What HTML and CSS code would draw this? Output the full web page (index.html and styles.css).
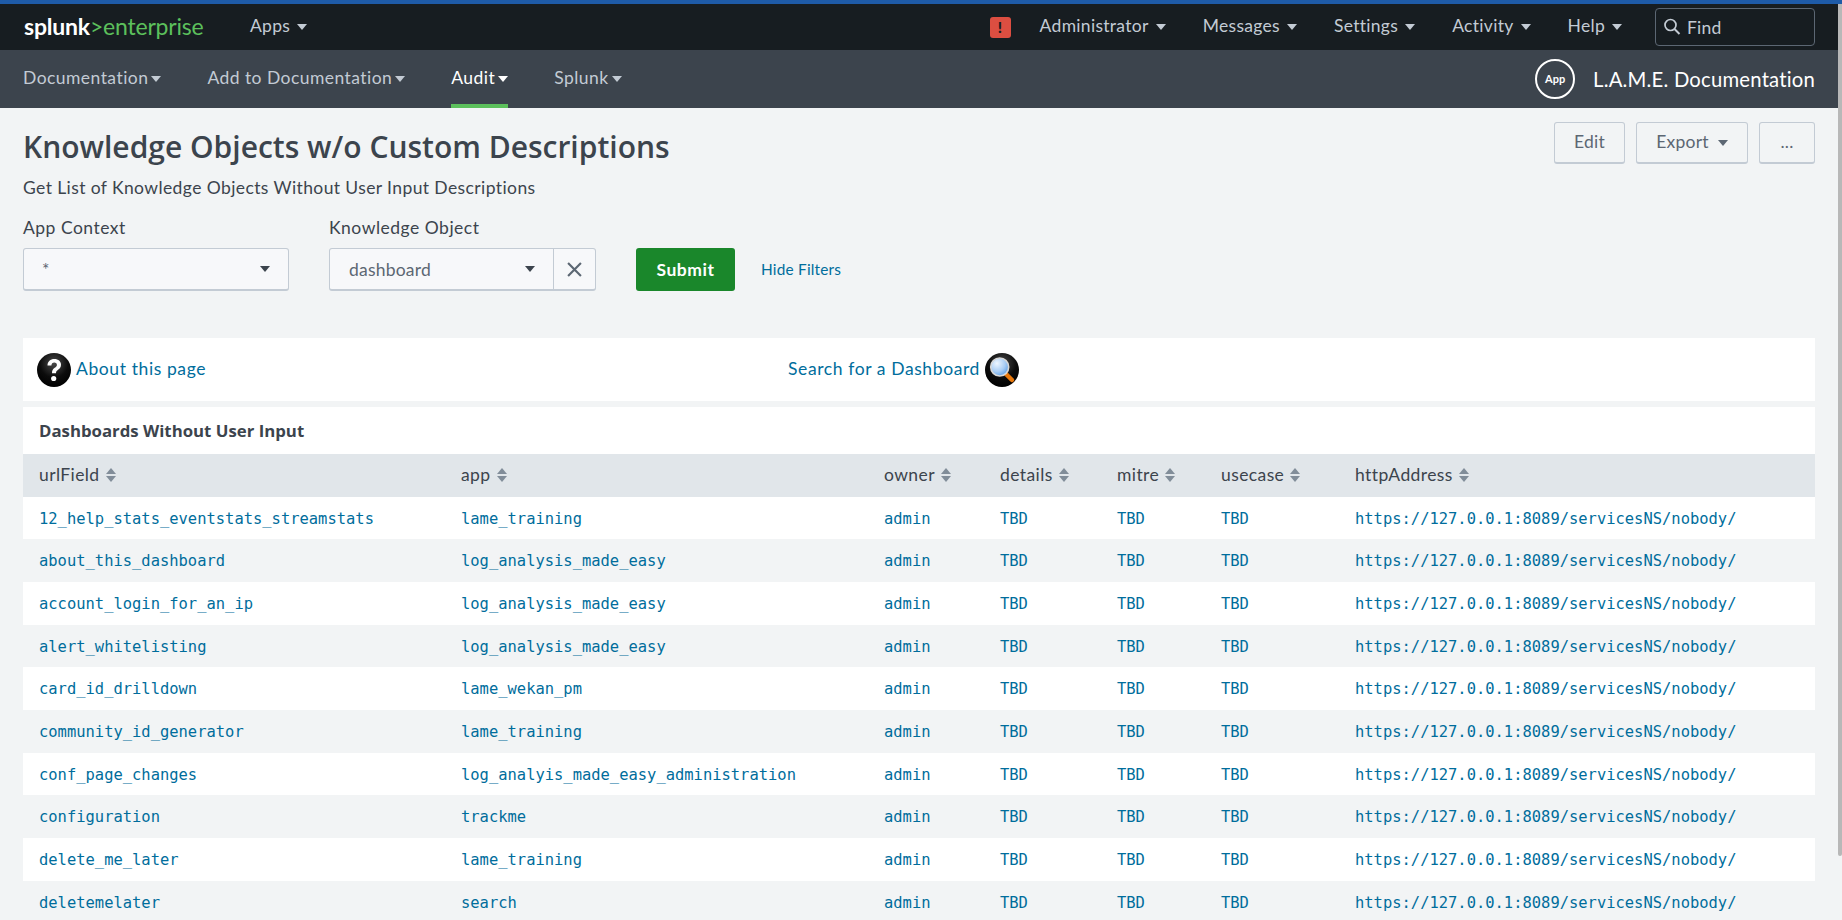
FILE: index.html
```html
<!DOCTYPE html>
<html>
<head>
<meta charset="UTF-8">
<title>Knowledge Objects w/o Custom Descriptions</title>
<link rel="stylesheet" href="styles.css">
</head>
<body>
<div class="topnav">
  <div class="logo"><span class="logo-white">splunk</span><span class="logo-green">&gt;enterprise</span></div>
  <a class="nav-item apps">Apps<i class="caret"></i></a>
  <div class="spacer"></div>
  <span class="alert">!</span>
  <a class="nav-item">Administrator<i class="caret"></i></a>
  <a class="nav-item">Messages<i class="caret"></i></a>
  <a class="nav-item">Settings<i class="caret"></i></a>
  <a class="nav-item">Activity<i class="caret"></i></a>
  <a class="nav-item">Help<i class="caret"></i></a>
  <div class="find">
    <svg width="18" height="18" viewBox="0 0 18 18"><circle cx="7.5" cy="7" r="5.5" fill="none" stroke="#c3cbd4" stroke-width="1.7"/><path d="M11.5 11l5 5" stroke="#c3cbd4" stroke-width="2"/></svg>
    <span>Find</span>
  </div>
</div>
<div class="appbar">
  <a class="app-item">Documentation<i class="caret"></i></a>
  <a class="app-item">Add to Documentation<i class="caret"></i></a>
  <a class="app-item active">Audit<i class="caret"></i></a>
  <a class="app-item">Splunk<i class="caret"></i></a>
  <div class="spacer"></div>
  <span class="app-icon">App</span>
  <span class="app-name">L.A.M.E. Documentation</span>
</div>
<div class="content">
  <div class="head">
    <div>
      <h1>Knowledge Objects w/o Custom Descriptions</h1>
      <p class="sub">Get List of Knowledge Objects Without User Input Descriptions</p>
    </div>
    <div class="head-btns">
      <a class="btn btn-edit">Edit</a>
      <a class="btn btn-export">Export<i class="caret"></i></a>
      <a class="btn btn-more">...</a>
    </div>
  </div>
  <div class="filters">
    <div class="field field-app">
      <label>App Context</label>
      <div class="select"><span class="val star">*</span><i class="caret"></i></div>
    </div>
    <div class="field field-ko">
      <label>Knowledge Object</label>
      <div class="select select-clear">
        <div class="select-main"><span class="val">dashboard</span><i class="caret"></i></div>
        <div class="clear">
          <svg width="15" height="15" viewBox="0 0 14 14"><path d="M1 1l12 12M13 1L1 13" stroke="#5c6773" stroke-width="2"/></svg>
        </div>
      </div>
    </div>
    <a class="submit">Submit</a>
    <a class="hide-filters">Hide Filters</a>
  </div>
  <div class="panel links">
    <div class="link-left">
      <svg class="round-icon" width="34" height="34" viewBox="0 0 34 34">
        <defs><radialGradient id="ball" cx="50%" cy="30%" r="70%"><stop offset="0" stop-color="#4a4a4a"/><stop offset=".6" stop-color="#0c0c0c"/><stop offset="1" stop-color="#000"/></radialGradient></defs>
        <circle cx="17" cy="17" r="17" fill="url(#ball)"/>
        <path d="M10.5 12.5c0-4 3-6.500 6.800-6.500 4 0 6.700 2.400 6.700 5.800 0 2.600-1.500 4-3.200 5.200-1.300.9-1.800 1.600-1.800 3.200h-4c0-2.700.8-4 2.700-5.400 1.400-1 2.200-1.700 2.200-2.900 0-1.400-1.100-2.300-2.600-2.300-1.700 0-2.800 1-2.900 2.900z" fill="#fff"/>
        <circle cx="16.700" cy="25.500" r="2.600" fill="#fff"/>
      </svg>
      <a>About this page</a>
    </div>
    <div class="link-mid">
      <a>Search for a Dashboard</a>
      <svg class="round-icon" width="34" height="34" viewBox="0 0 34 34">
        <defs>
          <radialGradient id="lens" cx="35%" cy="30%" r="75%"><stop offset="0" stop-color="#eef6ff"/><stop offset=".6" stop-color="#a9cdf5"/><stop offset="1" stop-color="#5b9ee8"/></radialGradient>
        </defs>
        <circle cx="17" cy="17" r="17" fill="url(#ball)"/>
        <path d="M21 21l6 6" stroke="#e8780c" stroke-width="4.500" stroke-linecap="round"/>
        <circle cx="14.700" cy="14" r="9" fill="url(#lens)" stroke="#d8d8d8" stroke-width="1.600"/>
      </svg>
    </div>
  </div>
  <div class="panel table-panel">
    <h2>Dashboards Without User Input</h2>
    <table>
      <colgroup>
        <col class="c1"><col class="c2"><col class="c3"><col class="c4"><col class="c5"><col class="c6"><col class="c7">
      </colgroup>
      <thead>
        <tr>
          <th>urlField<i class="sort"></i></th>
          <th>app<i class="sort"></i></th>
          <th>owner<i class="sort"></i></th>
          <th>details<i class="sort"></i></th>
          <th>mitre<i class="sort"></i></th>
          <th>usecase<i class="sort"></i></th>
          <th>httpAddress<i class="sort"></i></th>
        </tr>
      </thead>
      <tbody>
        <tr><td>12_help_stats_eventstats_streamstats</td><td>lame_training</td><td>admin</td><td>TBD</td><td>TBD</td><td>TBD</td><td>https://127.0.0.1:8089/servicesNS/nobody/</td></tr>
        <tr><td>about_this_dashboard</td><td>log_analysis_made_easy</td><td>admin</td><td>TBD</td><td>TBD</td><td>TBD</td><td>https://127.0.0.1:8089/servicesNS/nobody/</td></tr>
        <tr><td>account_login_for_an_ip</td><td>log_analysis_made_easy</td><td>admin</td><td>TBD</td><td>TBD</td><td>TBD</td><td>https://127.0.0.1:8089/servicesNS/nobody/</td></tr>
        <tr><td>alert_whitelisting</td><td>log_analysis_made_easy</td><td>admin</td><td>TBD</td><td>TBD</td><td>TBD</td><td>https://127.0.0.1:8089/servicesNS/nobody/</td></tr>
        <tr><td>card_id_drilldown</td><td>lame_wekan_pm</td><td>admin</td><td>TBD</td><td>TBD</td><td>TBD</td><td>https://127.0.0.1:8089/servicesNS/nobody/</td></tr>
        <tr><td>community_id_generator</td><td>lame_training</td><td>admin</td><td>TBD</td><td>TBD</td><td>TBD</td><td>https://127.0.0.1:8089/servicesNS/nobody/</td></tr>
        <tr><td>conf_page_changes</td><td>log_analyis_made_easy_administration</td><td>admin</td><td>TBD</td><td>TBD</td><td>TBD</td><td>https://127.0.0.1:8089/servicesNS/nobody/</td></tr>
        <tr><td>configuration</td><td>trackme</td><td>admin</td><td>TBD</td><td>TBD</td><td>TBD</td><td>https://127.0.0.1:8089/servicesNS/nobody/</td></tr>
        <tr><td>delete_me_later</td><td>lame_training</td><td>admin</td><td>TBD</td><td>TBD</td><td>TBD</td><td>https://127.0.0.1:8089/servicesNS/nobody/</td></tr>
        <tr><td>deletemelater</td><td>search</td><td>admin</td><td>TBD</td><td>TBD</td><td>TBD</td><td>https://127.0.0.1:8089/servicesNS/nobody/</td></tr>
      </tbody>
    </table>
  </div>
</div>
<div class="scroll-thumb"></div>
</body>
</html>
```

FILE: styles.css
```css
html,body{margin:0;height:920px;overflow:hidden}
body{font-family:Lato,"Open Sans",sans-serif;font-size:17.5px;letter-spacing:.2px;background-color:#f2f4f5;color:#3c444d;border-top:4px solid #1e5ba8;box-sizing:border-box;position:relative}
.spacer{flex:1}
.caret{display:inline-block;width:0;height:0;border-left:5px solid transparent;border-right:5px solid transparent;border-top:6px solid currentColor;margin-left:7px;vertical-align:2px}

.topnav{height:46px;background-color:#171d21;display:flex;align-items:center;padding:0 27px 0 24px;color:#c3cbd4}
.logo{width:226px;font-size:23px;letter-spacing:-.2px;margin-bottom:3px}
.logo-white{color:#fff;font-weight:700}
.logo-green{color:#5cc05c}
.nav-item{margin:0 37px 3px 0;letter-spacing:.3px;white-space:nowrap}
.alert{width:21px;height:21px;background-color:#dc4e41;border-radius:3px;color:#171d21;font-weight:900;font-size:15px;line-height:21px;text-align:center;margin-right:29px}
.find{width:160px;height:38px;border:1px solid #5c6773;border-radius:4px;margin-left:-4px;display:flex;align-items:center;gap:6px;padding-left:7px;box-sizing:border-box}

.appbar{height:58px;background-color:#3c444d;display:flex;align-items:center;padding:0 27px 0 23px;color:#c3cbd4}
.app-item{margin-right:46px;height:58px;line-height:56px;box-sizing:border-box;letter-spacing:.45px;white-space:nowrap}
.app-item .caret{margin-left:3px}
.app-item.active{color:#fff;border-bottom:4px solid #5cc05c}
.app-icon{width:36px;height:36px;border:2px solid #fff;border-radius:50%;color:#fff;font-size:11px;letter-spacing:0;font-weight:700;line-height:36px;text-align:center;margin-right:18px}
.app-name{color:#fff;font-size:20.3px}

.content{padding:0 27px 0 23px}
.head{display:flex;justify-content:space-between;height:112px}
h1{font-family:"Open Sans",sans-serif;font-size:30px;font-weight:600;letter-spacing:0;margin:20px 0 0;line-height:38px;white-space:nowrap}
.sub{margin:12px 0 0;line-height:20px;letter-spacing:.4px}
.head-btns{display:flex;gap:11px;padding-top:14px}
.btn{height:42px;line-height:38px;box-sizing:border-box;border:1px solid #c3cbd4;border-bottom-width:2px;border-radius:3px;text-align:center;color:#5c6773}
.btn-edit{width:71px}
.btn-export{width:112px}
.btn-export .caret{margin-left:9px}
.btn-more{width:56px}

.filters{display:flex;align-items:flex-end;height:71px}
.field{display:flex;flex-direction:column}
.field label{line-height:20px;margin-bottom:10px;letter-spacing:.5px}
.field-app{width:266px;margin-right:40px}
.field-ko{width:267px;margin-right:40px}
.select{height:43px;box-sizing:border-box;border:1px solid #c3cbd4;border-bottom-width:2px;border-radius:3px;background-color:#f7f8fa;display:flex;align-items:center;justify-content:space-between;padding:0 18px;color:#5c6773}
.select .caret{color:#3c444d}
.select-clear{padding:0}
.select-main{flex:1;display:flex;align-items:center;justify-content:space-between;padding:0 18px 0 19px;height:100%}
.clear{width:41px;height:100%;border-left:1px solid #c3cbd4;display:flex;align-items:center;justify-content:center}
.submit{width:99px;height:43px;line-height:43px;background-color:#1a872b;border-radius:3px;color:#fff;font-weight:700;letter-spacing:.5px;text-align:center}
.hide-filters{color:#006d9c;font-size:15.4px;margin:0 0 13px 26px}

.panel{background-color:#fff}
.links{margin-top:47px;height:63px;display:flex;align-items:center;letter-spacing:.6px}
.links a{color:#006d9c;margin-bottom:2px}
.round-icon{flex:none}
.link-left{display:flex;align-items:center;gap:5px;width:765px;padding-left:14px;box-sizing:border-box}
.link-mid{display:flex;align-items:center;gap:5px}
.table-panel{margin-top:6px}
h2{font-family:"Open Sans",sans-serif;font-size:16.8px;font-weight:700;letter-spacing:0;margin:0;padding:0 16px;height:47px;line-height:48px}
table{border-collapse:collapse;table-layout:fixed;width:100%}
.c1{width:422px}
.c2{width:423px}
.c3{width:116px}
.c4{width:117px}
.c5{width:104px}
.c6{width:134px}
.c7{width:476px}
th{box-sizing:border-box;background-color:#e1e6ea;height:43px;padding:0 0 2px 16px;text-align:left;font-weight:400;color:#3c444d;letter-spacing:.4px}
td{box-sizing:border-box;height:43px;padding:0 0 0 16px;font-family:"DejaVu Sans Mono",monospace;font-size:15.46px;letter-spacing:0;color:#006d9c;white-space:nowrap}
tbody tr:nth-child(3n+1) td{height:42px;padding-top:1px}
tbody tr:nth-child(even){background-color:#f2f4f5}
.sort{display:inline-block;position:relative;width:10px;height:14px;margin-left:6px;vertical-align:-1px}
.sort::before,.sort::after{content:"";position:absolute;left:0;border-left:5px solid transparent;border-right:5px solid transparent}
.sort::before{top:0;border-bottom:6px solid #818d99}
.sort::after{bottom:0;border-top:6px solid #818d99}

.scroll-thumb{position:absolute;right:0;top:-4px;width:4px;height:856px;background-color:#b8b8b8;border-radius:0 0 2px 2px}
```
